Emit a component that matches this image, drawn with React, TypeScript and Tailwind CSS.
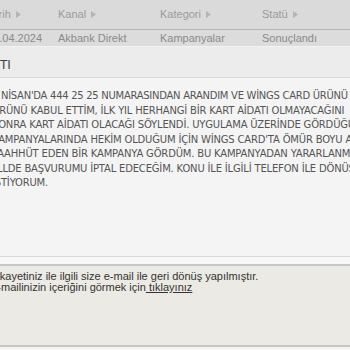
import React from "react";

const cols = [
  { head: "Tarih", value: "10.04.2024", w: "w-[71px]" },
  { head: "Kanal", value: "Akbank Direkt", w: "w-[102px]" },
  { head: "Kategori", value: "Kampanyalar", w: "w-[102px]" },
  { head: "Statü", value: "Sonuçlandı", w: "w-[102px]" },
];

// body lines as wrapped in the original (left edge is scrolled off)
const lines = [
  { text: "NİSAN'DA 444 25 25 NUMARASINDAN ARANDIM VE WİNGS CARD ÜRÜNÜ", cls: "pl-[9px] tracking-[-0.28px]" },
  { text: "ÜRÜNÜ KABUL ETTİM, İLK YIL HERHANGİ BİR KART AİDATI OLMAYACAĞINI", cls: "" },
  { text: "SONRA KART AİDATI OLACAĞI SÖYLENDİ. UYGULAMA ÜZERİNDE GÖRDÜĞÜM", cls: "" },
  { text: "KAMPANYALARINDA HEKİM OLDUĞUM İÇİN WİNGS CARD'TA ÖMÜR BOYU AİDATSIZ", cls: "" },
  { text: "TAAHHÜT EDEN BİR KAMPANYA GÖRDÜM. BU KAMPANYADAN YARARLANMAK", cls: "" },
  { text: "LLDE BAŞVURUMU İPTAL EDECEĞİM. KONU İLE İLGİLİ TELEFON İLE DÖNÜŞ", cls: "pl-[5px]" },
  { text: "İSTİYORUM.", cls: "" },
];

function Arrow() {
  return (
    <svg width="5" height="7" viewBox="0 0 5 7" className="ml-[5px] inline-block">
      <path d="M0 0 L5 3.5 L0 7 Z" fill="#b5b5b5" />
    </svg>
  );
}

export default function App() {
  return (
    <div className="w-[350px] h-[350px] overflow-hidden bg-[#f4f4f4] font-['Liberation_Sans',Arial,sans-serif]">
      {/* table header */}
      <div className="flex h-[30px] items-center bg-[#dadada] border-b border-[#b4b4b4] text-[11px] text-[#9a9a9a] -ml-[13px]">
        {cols.map((c) => (
          <div key={c.head} className={`${c.w} shrink-0 flex items-center`}>
            {c.head}
            <Arrow />
          </div>
        ))}
      </div>
      {/* data row */}
      <div className="flex h-[17px] items-center bg-[#dcdcdc] border-b border-[#f2f2f2] text-[11px] text-[#8a8a8a] -ml-[13px]">
        {cols.map((c) => (
          <div key={c.head} className={`${c.w} shrink-0 whitespace-nowrap`}>
            {c.value}
          </div>
        ))}
      </div>
      {/* title */}
      <div className="h-[31px] flex items-center pt-[6px] bg-[#ececec] border-b border-[#d6d6d6] text-[12px] text-[#444] font-['DejaVu_Sans',Verdana,sans-serif]">
        <span>TI</span>
      </div>
      {/* body */}
      <div className="h-[178px] pt-[11px] -ml-[8px] font-['DejaVu_Sans',Verdana,sans-serif] text-[10px] tracking-[-0.18px] leading-[14.5px] text-[#555] whitespace-nowrap">
        {lines.map((l, i) => (
          <div key={i} className={l.cls}>
            {l.text}
          </div>
        ))}
      </div>
      <div className="h-[8px] border-t border-[#d8d8d8] bg-[#f7f7f7]" />
      {/* reply box */}
      <div className="h-[83px] border-t-[2px] border-b-[2px] border-[#c6c6c6] bg-[#ebeae4] pt-[5px] text-[11px] leading-[11px] text-[#333] -ml-[10px] whitespace-nowrap">
        <div>Şikayetiniz ile ilgili size e-mail ile geri dönüş yapılmıştır.</div>
        <div>
          E-mailinizin içeriğini görmek için<span className="underline"> tıklayınız</span>
        </div>
      </div>
    </div>
  );
}
